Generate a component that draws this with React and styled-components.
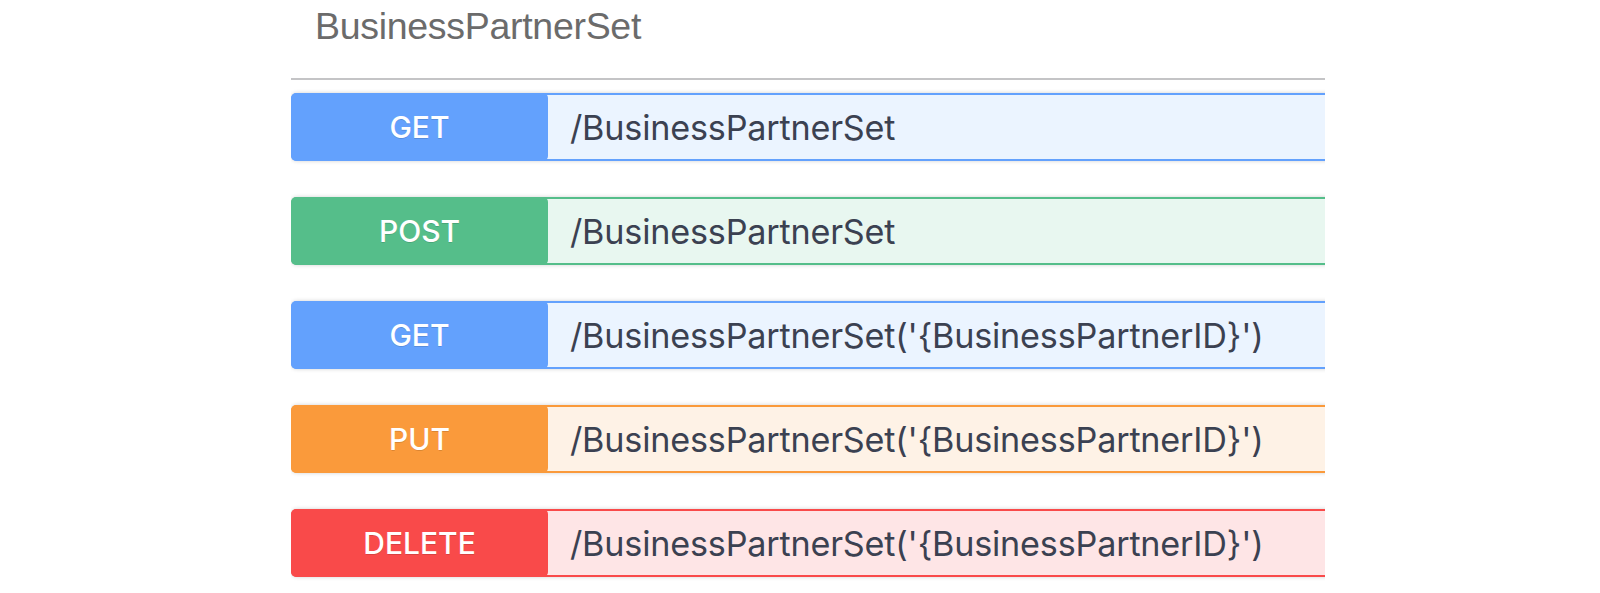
import styled, { createGlobalStyle } from 'styled-components';

const GlobalStyle = createGlobalStyle`
    body {
        margin: 0;
        background: #fff;
        font-family: "Liberation Sans", Arial, sans-serif;
    }
`;

const methods = {
    get: { main: '#63a1fd', soft: '#ebf4ff' },
    post: { main: '#55be8a', soft: '#e8f7f0' },
    put: { main: '#fa9a3b', soft: '#fef2e6' },
    delete: { main: '#f94a4a', soft: '#fee5e6' },
};

const operations = [
    { method: 'get', path: '/BusinessPartnerSet' },
    { method: 'post', path: '/BusinessPartnerSet' },
    { method: 'get', path: "/BusinessPartnerSet('{BusinessPartnerID}')" },
    { method: 'put', path: "/BusinessPartnerSet('{BusinessPartnerID}')" },
    { method: 'delete', path: "/BusinessPartnerSet('{BusinessPartnerID}')" },
];

const App = () => {
    return <>
        <GlobalStyle />
        <Section>
            <TagHeader>
                <h3>BusinessPartnerSet</h3>
            </TagHeader>
            <OpList>
                {operations.map((op, i) => (
                    <OpBlock key={i} $main={methods[op.method].main} $soft={methods[op.method].soft}>
                        <MethodBadge $main={methods[op.method].main}>
                            {op.method.toUpperCase()}
                        </MethodBadge>
                        <OpPath>{op.path}</OpPath>
                    </OpBlock>
                ))}
            </OpList>
        </Section>
    </>
};

const Section = styled.div`
    margin-left: 291px;
    width: 1034px;
    height: 593px;
    overflow: hidden;
`;

const TagHeader = styled.div`
    box-sizing: border-box;
    height: 80px;
    border-bottom: 2px solid #c4c4c6;

    h3 {
        margin: 0;
        padding: 3px 0 0 24px;
        font-size: 37.5px;
        font-weight: 400;
        line-height: 46px;
        color: #6b6b6b;
        letter-spacing: -0.3px;
    }
`;

const OpList = styled.div`
    display: flex;
    flex-direction: column;
    gap: 36px;
    padding-top: 13px;
`;

const OpBlock = styled.div`
    display: flex;
    align-items: stretch;
    width: 1100px;
    height: 68px;
    box-sizing: border-box;
    border: 2px solid ${p => p.$main};
    border-radius: 6px;
    background: ${p => p.$soft};
    box-shadow: 0 0 4px rgba(0, 0, 0, 0.18);
`;

const MethodBadge = styled.div`
    display: flex;
    align-items: center;
    justify-content: center;
    width: 257px;
    margin: -2px 0 -2px -2px;
    border-radius: 5px;
    background: ${p => p.$main};
    color: #fff;
    font-family: Inter, sans-serif;
    font-size: 30px;
    font-weight: 500;
    text-shadow: 0 1px 0 rgba(0, 0, 0, 0.12);
`;

const OpPath = styled.span`
    display: flex;
    align-items: center;
    padding-left: 22px;
    color: #3b4151;
    font-family: Inter, sans-serif;
    font-size: 34.2px;
    letter-spacing: -0.2px;
`;

export default App;
